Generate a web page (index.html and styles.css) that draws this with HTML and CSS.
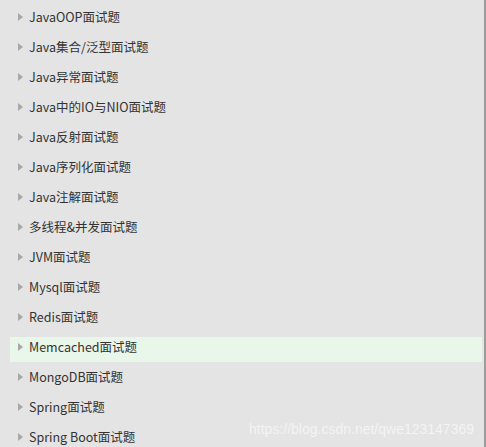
FILE: index.html
```html
<!DOCTYPE html>
<html>
  <head>
    <meta name="viewport" content="width=device-width,initial-scale=1.0">
    <title>面试题</title>
    <link rel="stylesheet" href="styles.css">
  </head>
  <body>
    <div class="panel">
      <ul class="menu">
        <li class="menu-item"><span class="arrow"></span>JavaOOP面试题</li>
        <li class="menu-item"><span class="arrow"></span>Java集合/泛型面试题</li>
        <li class="menu-item"><span class="arrow"></span>Java异常面试题</li>
        <li class="menu-item"><span class="arrow"></span>Java中的IO与NIO面试题</li>
        <li class="menu-item"><span class="arrow"></span>Java反射面试题</li>
        <li class="menu-item"><span class="arrow"></span>Java序列化面试题</li>
        <li class="menu-item"><span class="arrow"></span>Java注解面试题</li>
        <li class="menu-item"><span class="arrow"></span>多线程&amp;并发面试题</li>
        <li class="menu-item"><span class="arrow"></span>JVM面试题</li>
        <li class="menu-item"><span class="arrow"></span>Mysql面试题</li>
        <li class="menu-item"><span class="arrow"></span>Redis面试题</li>
        <li class="menu-item active"><span class="arrow"></span>Memcached面试题</li>
        <li class="menu-item"><span class="arrow"></span>MongoDB面试题</li>
        <li class="menu-item"><span class="arrow"></span>Spring面试题</li>
        <li class="menu-item"><span class="arrow"></span>Spring Boot面试题</li>
      </ul>
      <div class="watermark">https://blog.csdn.net/qwe123147369</div>
    </div>
  </body>
</html>
```

FILE: styles.css
```css
body {
  margin: 0;
  padding: 0;
  background: #e4e4e4;
  font-family: "Noto Sans CJK SC", "Noto Sans", sans-serif;
}

.panel {
  position: relative;
  width: 484px;
  height: 447px;
  border-right: 2px solid #9c9c9c;
  overflow: hidden;
}

.menu {
  list-style: none;
  margin: 0;
  padding: 2px 2px 0 10px;
}

.menu-item {
  display: flex;
  align-items: center;
  box-sizing: border-box;
  height: 25px;
  margin-top: 5px;
  padding-left: 8px;
  padding-bottom: 6px;
  font-size: 12.5px;
  color: #333;
}

.menu-item.active {
  background: #e9f6ea;
}

.arrow {
  width: 0;
  height: 0;
  border-top: 4px solid transparent;
  border-bottom: 4px solid transparent;
  border-left: 5px solid #a8a8a8;
  margin-right: 6px;
}

.watermark {
  position: absolute;
  right: 10px;
  bottom: 10px;
  font-family: "Liberation Sans", Arial, sans-serif;
  font-size: 14px;
  color: rgba(255, 255, 255, 0.6);
}
```
